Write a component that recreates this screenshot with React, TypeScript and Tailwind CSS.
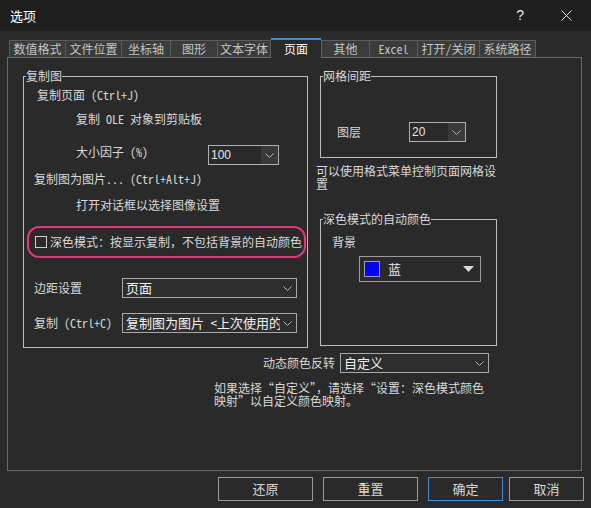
import React from "react";

const FONT = "font-['Noto_Sans_Mono_CJK_SC','Noto_Sans_CJK_SC',sans-serif]";

function Chevron() {
  return (
    <svg width="9" height="5" viewBox="0 0 9 5">
      <polyline points="0.5,0.5 4.5,4.5 8.5,0.5" fill="none" stroke="#b4b4b4" strokeWidth="1" />
    </svg>
  );
}

function SmallCombo({ value, w }: { value: string; w: string }) {
  return (
    <div className={`${w} h-[20px] border border-[#b0b0b0] bg-[#2a2a2a] flex items-stretch`}>
      <div className="flex-1 flex items-center pl-[2px] text-[12px] text-[#e6e6e6] font-['Liberation_Sans',sans-serif]">{value}</div>
      <div className="w-[17px] bg-[#3a3a3a] flex items-center justify-center">
        <Chevron />
      </div>
    </div>
  );
}

function WideCombo({ value, w }: { value: string; w: string }) {
  return (
    <div className={`${w} h-[20px] border border-[#a8a8a8] bg-[#2e2e2e] flex items-center`}>
      <div className="flex-1 overflow-hidden whitespace-nowrap pl-[3px] text-[13px] leading-[18px] text-[#f2f2f2]">{value}</div>
      <div className="w-[16px] shrink-0 flex items-center justify-center pr-[2px]">
        <Chevron />
      </div>
    </div>
  );
}

const tabsLeft = [
  { label: "数值格式", w: "w-[56px]" },
  { label: "文件位置", w: "w-[56px]" },
  { label: "坐标轴", w: "w-[49px]" },
  { label: "图形", w: "w-[47px]" },
  { label: "文本字体", w: "w-[54px]" },
];
const tabsRight = [
  { label: "其他", w: "w-[48px]" },
  { label: "Excel", w: "w-[48px]" },
  { label: "打开/关闭", w: "w-[62px]" },
  { label: "系统路径", w: "w-[57px]" },
];

export default function App() {
  return (
    <div className={`${FONT} w-[591px] h-[508px] bg-[#2a2a2a] text-[12px] text-[#d8d8d8] flex flex-col overflow-hidden`}>
      {/* title bar */}
      <div className="h-[31px] bg-[#1f1f1f] flex items-center pl-[10px] shrink-0">
        <span className="text-[13px] text-white">选项</span>
        <span className="ml-auto text-[14px] text-[#e8e8e8] font-['Liberation_Sans',sans-serif]">?</span>
        <span className="ml-[37px] mr-[19px] flex items-center">
          <svg width="11" height="11" viewBox="0 0 11 11">
            <line x1="0.5" y1="0.5" x2="10.5" y2="10.5" stroke="#e8e8e8" strokeWidth="1" />
            <line x1="10.5" y1="0.5" x2="0.5" y2="10.5" stroke="#e8e8e8" strokeWidth="1" />
          </svg>
        </span>
      </div>

      {/* tabs */}
      <div className="mt-[7px] ml-[9px] flex items-end h-[19px]">
        {tabsLeft.map((t, i) => (
          <div
            key={t.label}
            className={`${t.w} h-[17px] bg-[#3b3b3b] border-t border-l border-[#5c5c5c] ${i === tabsLeft.length - 1 ? "border-r" : ""} flex items-center justify-center text-[#c4c4c4] leading-none`}
          >
            {t.label}
          </div>
        ))}
        <div className="relative z-10 w-[50px] h-[20px] -mb-px bg-[#2a2a2a] border-t-2 border-[#3b8ed8] flex items-center justify-center text-white leading-none">
          页面
        </div>
        {tabsRight.map((t, i) => (
          <div
            key={t.label}
            className={`${t.w} h-[17px] bg-[#3b3b3b] border-t border-l border-[#5c5c5c] ${i === tabsRight.length - 1 ? "border-r" : ""} flex items-center justify-center text-[#c4c4c4] leading-none`}
          >
            {t.label}
          </div>
        ))}
      </div>

      {/* page panel */}
      <div className="ml-[7px] w-[575px] h-[414px] border border-[#6a6a6a] flex flex-col shrink-0">
        <div className="mt-[10px] flex items-start">
          {/* left group */}
          <fieldset className="ml-[15px] w-[285px] h-[280px] border border-[#bdbdbd] flex flex-col">
            <legend className="ml-[2px] leading-[16px]">复制图</legend>
            <div className="mt-[3px] pl-[13px] leading-[16px]">复制页面 (Ctrl+J)</div>
            <div className="mt-[8px] pl-[52px] leading-[16px]">复制 OLE 对象到剪贴板</div>
            <div className="mt-[17px] pl-[52px] flex items-start h-[21px]">
              <span className="leading-[16px] w-[132px]">大小因子 (%)</span>
              <div className="mt-[1px]">
                <SmallCombo value="100" w="w-[71px]" />
              </div>
            </div>
            <div className="mt-[6px] pl-[10px] leading-[16px]">复制图为图片... (Ctrl+Alt+J)</div>
            <div className="mt-[10px] pl-[52px] leading-[16px]">打开对话框以选择图像设置</div>
            <div className="mt-[13px] ml-[3px] w-[279px] h-[32px] border-2 border-[#e8307c] rounded-[12px] flex items-center pl-[6px]">
              <div className="w-[12px] h-[12px] border border-[#d0d0d0] shrink-0" />
              <span className="ml-[3px] whitespace-nowrap leading-[16px]">深色模式：按显示复制，不包括背景的自动颜色</span>
            </div>
            <div className="mt-[20px] pl-[10px] flex items-center">
              <span className="w-[88px]">边距设置</span>
              <WideCombo value="页面" w="w-[175px]" />
            </div>
            <div className="mt-[15px] pl-[10px] flex items-center">
              <span className="w-[88px] whitespace-nowrap">复制 (Ctrl+C)</span>
              <WideCombo value="复制图为图片 <上次使用的>" w="w-[175px]" />
            </div>
          </fieldset>

          {/* right column */}
          <div className="ml-[8px] flex flex-col">
            <fieldset className="ml-[4px] w-[177px] h-[90px] border border-[#bdbdbd] flex flex-col">
              <legend className="ml-[2px] leading-[16px]">网格间距</legend>
              <div className="mt-[38px] pl-[16px] flex items-center">
                <span className="w-[72px]">图层</span>
                <SmallCombo value="20" w="w-[57px]" />
              </div>
            </fieldset>
            <div className="mt-[6px] w-[182px] leading-[13px]">
              可以使用格式菜单控制页面网格设
              <br />置
            </div>
            <fieldset className="mt-[21px] ml-[4px] w-[177px] h-[135px] border border-[#bdbdbd] flex flex-col">
              <legend className="ml-[2px] leading-[16px]">深色模式的自动颜色</legend>
              <div className="mt-[7px] pl-[11px] leading-[16px]">背景</div>
              <div className="mt-[6px] ml-[38px] w-[122px] h-[26px] border border-[#9c9c9c] flex items-center pl-[4px]">
                <div className="w-[16px] h-[16px] bg-[#0000ff] border border-[#a0a0a0]" />
                <span className="ml-[8px] text-[13px] text-[#e8e8e8]">蓝</span>
                <svg className="ml-auto mr-[6px]" width="11" height="6" viewBox="0 0 11 6">
                  <polygon points="0,0 11,0 5.5,6" fill="#d8d8d8" />
                </svg>
              </div>
            </fieldset>
          </div>
        </div>

        {/* dynamic color row */}
        <div className="mt-[5px] flex items-center">
          <span className="w-[327px] text-right">动态颜色反转</span>
          <div className="ml-[5px]">
            <WideCombo value="自定义" w="w-[149px]" />
          </div>
        </div>
        <div className="mt-[8px] ml-[206px] leading-[13px] whitespace-nowrap">
          如果选择“自定义”，请选择“设置：深色模式颜色
          <br />
          映射”以自定义颜色映射。
        </div>
      </div>

      {/* buttons */}
      <div className="mt-[6px] flex items-center pl-[218px]">
        <button className="w-[95px] h-[24px] border border-[#9a9a9a] text-[#d8d8d8] text-[13px]">还原</button>
        <button className="ml-[10px] w-[95px] h-[24px] border border-[#9a9a9a] text-[#d8d8d8] text-[13px]">重置</button>
        <button className="ml-[10px] w-[75px] h-[24px] border border-[#3b8ed8] text-[#d8d8d8] text-[13px]">确定</button>
        <button className="ml-[6px] w-[75px] h-[24px] border border-[#9a9a9a] text-[#d8d8d8] text-[13px]">取消</button>
      </div>
    </div>
  );
}
